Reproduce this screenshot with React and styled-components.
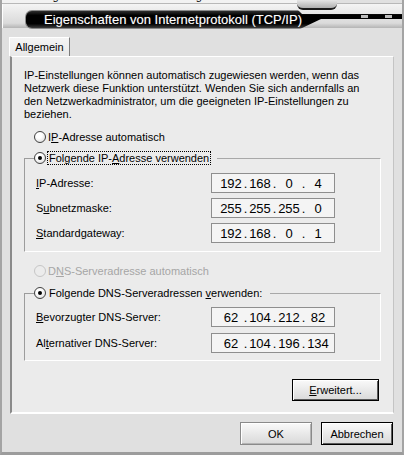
import React from 'react'
import styled, { createGlobalStyle } from 'styled-components'

const GlobalStyle = createGlobalStyle`
  html,
  body {
    margin: 0;
    padding: 0;
    background: #dcdcdc;
  }
  body {
    font-family: 'Liberation Sans', Arial, sans-serif;
    font-size: 11px;
    color: #000;
  }
`

const Key = ({ children }) => <u>{children}</u>

const ipGroup = [
  { label: ['', 'I', 'P-Adresse:'], value: ['192', '168', '0', '4'] },
  { label: ['S', 'u', 'bnetzmaske:'], value: ['255', '255', '255', '0'] },
  { label: ['', 'S', 'tandardgateway:'], value: ['192', '168', '0', '1'] },
]

const dnsGroup = [
  { label: ['', 'B', 'evorzugter DNS-Server:'], value: ['62', '104', '212', '82'] },
  { label: ['Al', 't', 'ernativer DNS-Server:'], value: ['62', '104', '196', '134'] },
]

const Field = ({ label, value }) => (
  <Row>
    <span>
      {label[0]}
      <Key>{label[1]}</Key>
      {label[2]}
    </span>
    <IpBox>
      {value.map((v, i) => (
        <React.Fragment key={i}>
          {i > 0 && <Dot>.</Dot>}
          <Octet>{v}</Octet>
        </React.Fragment>
      ))}
    </IpBox>
  </Row>
)

const App = () => {
  return (
    <>
      <GlobalStyle />
      <Window>
        <Behind>
          <span>Verbindung herstellen unter Verwendung von:</span>
        </Behind>
        <Header>
          <Knob />
          <TitleBar>
            <TitleText>Eigenschaften von Internetprotokoll (TCP/IP)</TitleText>
            <Controls>
              <span />
              <span />
            </Controls>
          </TitleBar>
        </Header>
        <TabStrip>
          <Tab>Allgemein</Tab>
        </TabStrip>
        <Panel>
          <Intro>
            IP-Einstellungen können automatisch zugewiesen werden, wenn das
            <br />
            Netzwerk diese Funktion unterstützt. Wenden Sie sich andernfalls an
            <br />
            den Netzwerkadministrator, um die geeigneten IP-Einstellungen zu
            <br />
            beziehen.
          </Intro>

          <RadioRow $top={9}>
            <Radio />
            <span>
              I<Key>P</Key>-Adresse automatisch
            </span>
          </RadioRow>

          <Group $top={8}>
            <GroupHead>
              <Stub />
              <Radio $checked />
              <Caption $focus>
                Folgende IP-<Key>A</Key>dresse verwenden
              </Caption>
              <Rule />
            </GroupHead>
            <GroupBody $gap={5} $pad={8}>
              {ipGroup.map((f, i) => (
                <Field key={i} {...f} />
              ))}
            </GroupBody>
          </Group>

          <RadioRow $top={12} $disabled>
            <Radio $disabled />
            <span>
              D<Key>N</Key>S-Serveradresse automatisch
            </span>
          </RadioRow>

          <Group $top={9}>
            <GroupHead>
              <Stub />
              <Radio $checked />
              <Caption>
                Folgende DNS-Serveradressen <Key>v</Key>erwenden:
              </Caption>
              <Rule />
            </GroupHead>
            <GroupBody $gap={6} $pad={7}>
              {dnsGroup.map((f, i) => (
                <Field key={i} {...f} />
              ))}
            </GroupBody>
          </Group>

          <AdvancedRow>
            <Button $w={87} $h={22} $strong>
              <Key>E</Key>rweitert...
            </Button>
          </AdvancedRow>
        </Panel>
        <Footer>
          <Button $w={72} $h={23}>
            OK
          </Button>
          <Button $w={72} $h={23} $strong>
            Abbrechen
          </Button>
        </Footer>
      </Window>
    </>
  )
}

const Window = styled.div`
  width: 404px;
  height: 455px;
  box-sizing: border-box;
  display: flex;
  flex-direction: column;
  background: #e0e0e0;
  border-left: 2px solid #a4a4a4;
  border-right: 2px solid #a4a4a4;
  border-bottom: 3px solid #9c9c9c;
  overflow: hidden;
`

const Behind = styled.div`
  height: 3px;
  margin: 0 100px 0 -2px;
  display: flex;
  align-items: flex-end;
  overflow: hidden;
  background: #f2f2f2;
  span {
    line-height: 13px;
    white-space: nowrap;
    padding-left: 3px;
  }
`

const Header = styled.div`
  position: relative;
  height: 25px;
  box-sizing: border-box;
  padding: 6px 0 0 23px;
  background: linear-gradient(#f4f4f4, #dadada 80%, #b4b4b4);
  border-top: 1px solid #b8b8b8;
  box-shadow: inset 1px 0 0 #fff;
`

const Knob = styled.div`
  position: absolute;
  left: 295px;
  top: -4px;
  width: 40px;
  height: 8px;
  background: linear-gradient(#e6e6e6, #b0b0b0);
  border-bottom: 2px solid #1c1c1c;
  border-radius: 0 0 6px 6px;
`

const TitleBar = styled.div`
  height: 19px;
  box-sizing: border-box;
  display: flex;
  align-items: center;
  background: linear-gradient(#2e2e2e, #000 25%, #000 75%, #3c3c3c);
  border: 1px solid #8a8a8a;
  border-right: none;
  border-radius: 7px 0 0 7px;
  clip-path: polygon(
    0 0,
    273px 0,
    277px 4px,
    100% 4px,
    100% 9px,
    296px 9px,
    275px 100%,
    0 100%
  );
`

const TitleText = styled.span`
  padding-left: 18px;
  color: #fff;
  font-size: 13px;
  white-space: nowrap;
  text-shadow: 0 0 1px #555;
`

const Controls = styled.div`
  margin-left: auto;
  align-self: flex-start;
  display: flex;
  gap: 17px;
  padding: 4px 10px 0 0;
  span {
    width: 7px;
    height: 3px;
    background: #bcbcbc;
  }
`

const TabStrip = styled.div`
  display: flex;
  padding: 9px 0 0 7px;
`

const Tab = styled.div`
  width: 61px;
  height: 19px;
  box-sizing: border-box;
  display: flex;
  align-items: center;
  justify-content: center;
  background: linear-gradient(#f4f4f4, #e8e8e8);
  border-top: 1px solid #fff;
  border-left: 1px solid #fff;
  border-right: 1px solid #7c7c7c;
`

const Panel = styled.div`
  height: 358px;
  box-sizing: border-box;
  margin: 0 8px;
  padding: 0 12px;
  display: flex;
  flex-direction: column;
  background: #ebebeb;
  border-top: 1px solid #fff;
  border-left: 2px solid #8a8a8a;
  border-right: 1px solid #c4c4c4;
  border-bottom: 2px solid #fff;
`

const Intro = styled.p`
  margin: 12px 0 0;
  line-height: 13px;
  white-space: nowrap;
`

const RadioRow = styled.div`
  display: flex;
  align-items: center;
  gap: 2px;
  height: 13px;
  margin: ${(p) => p.$top}px 0 0 10px;
  color: ${(p) => (p.$disabled ? '#a6a6a6' : '#000')};
`

const Radio = styled.span`
  width: 12px;
  height: 12px;
  box-sizing: border-box;
  flex: none;
  display: grid;
  place-items: center;
  border-radius: 50%;
  border: 1px solid ${(p) => (p.$disabled ? '#c6c6c6' : '#404040')};
  background: ${(p) =>
    p.$disabled
      ? '#ececec'
      : 'radial-gradient(circle at 40% 35%, #fff 30%, #d4d4d4)'};
  &::after {
    content: '';
    width: 4px;
    height: 4px;
    border-radius: 50%;
    background: ${(p) => (p.$checked ? '#000' : 'transparent')};
  }
`

const Group = styled.div`
  margin-top: ${(p) => p.$top}px;
`

const GroupHead = styled.div`
  display: flex;
  align-items: center;
  height: 14px;
`

const Stub = styled.div`
  align-self: flex-end;
  width: 10px;
  height: 7px;
  box-sizing: border-box;
  border-top: 1px solid #9c9c9c;
  border-left: 1px solid #9c9c9c;
`

const Caption = styled.span`
  margin-left: 1px;
  padding: 0 1px;
  height: 14px;
  line-height: 12px;
  box-sizing: border-box;
  border: 1px dotted ${(p) => (p.$focus ? '#000' : 'transparent')};
  white-space: nowrap;
`

const Rule = styled.div`
  flex: 1;
  align-self: flex-end;
  height: 7px;
  margin-left: 6px;
  box-sizing: border-box;
  border-top: 1px solid #a8a8a8;
  border-right: 1px solid #fff;
`

const GroupBody = styled.div`
  display: flex;
  flex-direction: column;
  gap: ${(p) => p.$gap}px;
  padding: ${(p) => p.$pad}px 0 ${(p) => p.$pad}px 11px;
  border-left: 1px solid #9c9c9c;
  border-right: 1px solid #fff;
  border-bottom: 1px solid #fff;
`

const Row = styled.div`
  display: grid;
  grid-template-columns: 175px 124px;
  align-items: center;
  height: 20px;
  white-space: nowrap;
`

const IpBox = styled.div`
  height: 20px;
  box-sizing: border-box;
  display: flex;
  align-items: center;
  padding-left: 7px;
  background: #f4f4f4;
  border: 1px solid #8e8e8e;
  font-size: 13px;
`

const Octet = styled.span`
  width: 24px;
  text-align: center;
`

const Dot = styled.span`
  width: 5px;
  text-align: center;
`

const AdvancedRow = styled.div`
  display: flex;
  justify-content: flex-end;
  margin-top: 18px;
  padding-right: 2px;
`

const Button = styled.button`
  width: ${(p) => p.$w}px;
  height: ${(p) => p.$h}px;
  padding: 0;
  font-family: inherit;
  font-size: 11px;
  color: #000;
  background: linear-gradient(#fafafa, #e6e6e6 60%, #d9d9d9);
  border: 1px solid ${(p) => (p.$strong ? '#000' : '#8a8a8a')};
  box-shadow: ${(p) =>
    p.$strong
      ? 'inset 1px 1px 0 #fff, inset -1px -1px 0 #5a5a5a'
      : 'inset 1px 1px 0 #fff, inset -1px -1px 0 #b4b4b4'};
`

const Footer = styled.div`
  display: flex;
  justify-content: flex-end;
  gap: 9px;
  padding: 8px 9px 0 0;
`

export default App
